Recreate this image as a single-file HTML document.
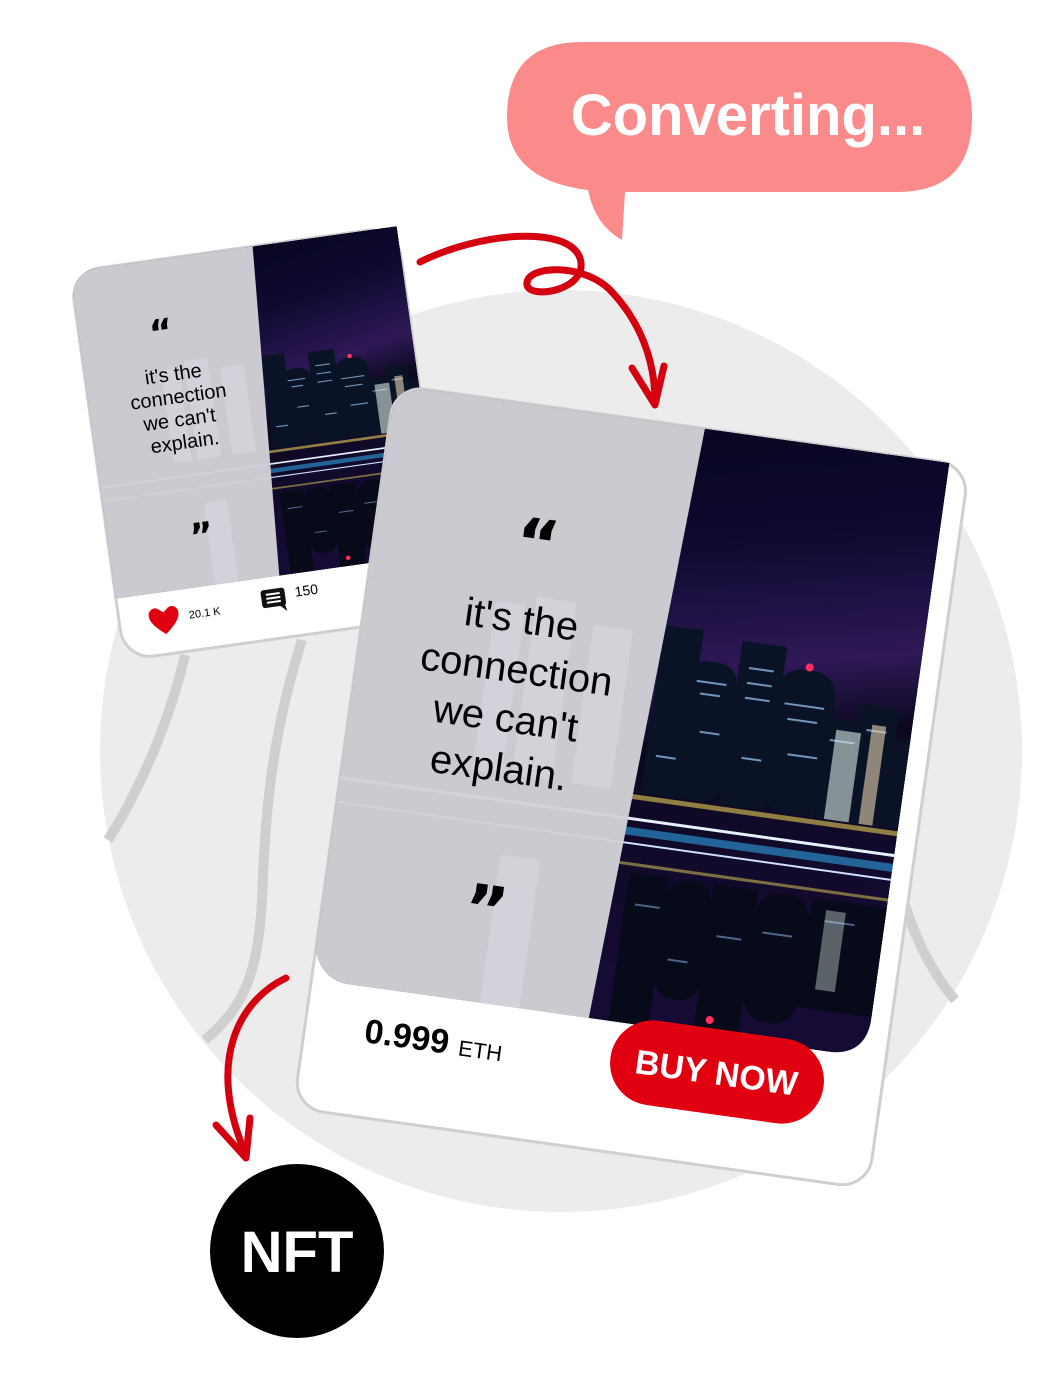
<!DOCTYPE html>
<html><head><meta charset="utf-8"><style>
html,body{margin:0;padding:0;background:#fff;}
svg{display:block;}
text{font-family:"Liberation Sans",sans-serif;}
.q{font-family:"DejaVu Sans",sans-serif;font-weight:bold;}
</style></head><body>
<svg width="1060" height="1378" viewBox="0 0 1060 1378" xmlns="http://www.w3.org/2000/svg">
<defs>
<linearGradient id="sky" x1="0" y1="0" x2="0.2" y2="1">
<stop offset="0" stop-color="#05041a"/><stop offset="0.3" stop-color="#0e0a30"/><stop offset="0.5" stop-color="#2e1856"/><stop offset="0.62" stop-color="#0c0820"/><stop offset="1" stop-color="#160b34"/>
</linearGradient>
<symbol id="city" viewBox="0 0 560 600" preserveAspectRatio="none">
<rect width="560" height="600" fill="url(#sky)"/>
<g fill="#0a1226">
<rect x="300" y="200" width="40" height="170"/><rect x="330" y="230" width="50" height="140" rx="20"/>
<rect x="380" y="205" width="45" height="165"/><rect x="420" y="225" width="60" height="145" rx="25"/>
<rect x="470" y="270" width="40" height="100"/><rect x="505" y="250" width="40" height="120"/><rect x="540" y="280" width="20" height="90"/>
</g>
<g fill="#9fd0ff" opacity="0.7">
<rect x="340" y="250" width="30" height="2"/><rect x="345" y="262" width="20" height="2"/><rect x="390" y="230" width="25" height="2"/><rect x="390" y="245" width="25" height="2"/><rect x="390" y="260" width="25" height="2"/><rect x="430" y="260" width="40" height="2"/><rect x="435" y="275" width="30" height="2"/><rect x="480" y="290" width="25" height="2"/><rect x="515" y="275" width="20" height="2"/><rect x="350" y="300" width="20" height="2"/><rect x="440" y="310" width="30" height="2"/><rect x="395" y="320" width="20" height="2"/><rect x="310" y="330" width="20" height="2"/>
</g>
<rect x="485" y="280" width="25" height="90" fill="#d8e8e0" opacity="0.6"/>
<rect x="520" y="270" width="14" height="100" fill="#e6d6b0" opacity="0.6"/>
<circle cx="450" cy="222" r="4" fill="#ff3060"/>
<rect x="290" y="372" width="270" height="5" fill="#c8b050" opacity="0.7"/>
<rect x="280" y="395" width="280" height="3" fill="#e6f2ff"/>
<rect x="280" y="405" width="280" height="8" fill="#2a8ac8" opacity="0.7"/>
<rect x="280" y="420" width="280" height="2" fill="#cfe0ff"/>
<rect x="280" y="440" width="280" height="3" fill="#c8b050" opacity="0.6"/>
<g fill="#070a18">
<rect x="300" y="450" width="40" height="150"/><rect x="340" y="450" width="45" height="120" rx="20"/><rect x="385" y="450" width="45" height="150"/><rect x="430" y="450" width="55" height="130" rx="25"/><rect x="485" y="450" width="75" height="110"/>
</g>
<g fill="#8fc0ff" opacity="0.5">
<rect x="310" y="480" width="25" height="2"/><rect x="395" y="500" width="25" height="2"/><rect x="440" y="490" width="30" height="2"/><rect x="500" y="470" width="30" height="2"/><rect x="350" y="530" width="20" height="2"/>
</g>
<rect x="500" y="460" width="20" height="80" fill="#d8e8e0" opacity="0.4"/>
<circle cx="400" cy="585" r="4" fill="#ff3060"/>
<path d="M0 0 H313 L280 600 H0 Z" fill="#cbcad0"/>
<g fill="#dcdee6" opacity="0.45">
<rect x="130" y="200" width="30" height="170"/><rect x="170" y="190" width="40" height="180"/><rect x="230" y="210" width="40" height="160"/>
<rect x="0" y="395" width="300" height="3"/><rect x="0" y="420" width="290" height="2"/>
<rect x="170" y="450" width="40" height="150"/>
</g>
</symbol>
<clipPath id="bigclip"><path d="M0 40 Q0 0 40 0 H560 V560 Q560 600 520 600 H40 Q10 600 0 570 Z"/></clipPath>
<clipPath id="smclip"><path d="M0 30 Q0 0 30 0 H330 V330 H0 Z"/></clipPath>
</defs>

<circle cx="561" cy="751" r="461" fill="#ececec"/>
<g fill="none" stroke="#cfcfcf" stroke-width="10">
<path d="M185 655 C170 720 140 790 108 840"/>
<path d="M302 640 C270 740 265 820 262 900 C258 980 240 1010 205 1040"/>
<path d="M898 880 C910 930 930 970 955 1000"/>
</g>

<path d="M582 42 H897 Q972 42 972 117 Q972 192 897 192 H625 L622 240 Q595 225 588 190 Q507 180 507 117 Q507 42 582 42 Z" fill="#fb8a8b"/>
<text x="748" y="135" font-size="58" font-weight="bold" fill="#fff" text-anchor="middle">Converting...</text>

<g transform="translate(70,272) rotate(-8)">
<rect x="0" y="0" width="330" height="392" rx="30" fill="#fff" stroke="#cfcfcf" stroke-width="3"/>
<g clip-path="url(#smclip)"><use href="#city" x="0" y="0" width="330" height="330"/></g>
<text class="q" x="82" y="85" font-size="36" text-anchor="middle">&#8220;</text>
<g font-size="20" text-anchor="middle">
<text x="88" y="122">it's the</text><text x="90" y="145">connection</text><text x="88" y="168">we can't</text><text x="90" y="191">explain.</text>
</g>
<text class="q" x="94" y="292" font-size="36" text-anchor="middle">&#8221;</text>
<path d="M45 372 C35 364 30 358 30 352 C30 346 36 343 40 346 L45 350 L50 346 C54 343 60 346 60 352 C60 358 55 364 45 372Z" fill="#e00010"/>
<text x="70" y="360" font-size="11">20.1 K</text>
<rect x="144" y="342" width="24" height="18" rx="3" fill="#111"/><path d="M160 358 L168 366 L166 356Z" fill="#111"/>
<g stroke="#fff" stroke-width="2"><line x1="149" y1="347" x2="163" y2="347"/><line x1="149" y1="351" x2="163" y2="351"/><line x1="149" y1="355" x2="163" y2="355"/></g>
<text x="178" y="353" font-size="14">150</text>
</g>

<g transform="translate(395,385) rotate(8)">
<rect x="0" y="0" width="580" height="730" rx="30" fill="#fff" stroke="#cfcfcf" stroke-width="3"/>
<g clip-path="url(#bigclip)"><use href="#city" x="0" y="0" width="560" height="600"/></g>
<text class="q" x="163" y="160" font-size="66" text-anchor="middle">&#8220;</text>
<g font-size="40" text-anchor="middle">
<text x="158" y="228">it's the</text><text x="160" y="278">connection</text><text x="156" y="328">we can't</text><text x="156" y="378">explain.</text>
</g>
<text class="q" x="163" y="530" font-size="66" text-anchor="middle">&#8221;</text>
<text x="60" y="655" font-size="34" font-weight="bold">0.999<tspan font-size="22" font-weight="normal" dx="10">ETH</tspan></text>
<rect x="307" y="593" width="215" height="85" rx="42" fill="#e00010"/>
<text x="414" y="648" font-size="34" font-weight="bold" fill="#fff" text-anchor="middle">BUY NOW</text>
</g>

<g fill="none" stroke="#d40010" stroke-width="7" stroke-linecap="round" stroke-linejoin="round">
<path d="M420 262 C480 232 568 225 580 258 C590 290 530 300 527 285 C524 265 585 262 612 292 C640 322 655 360 655 402"/>
<path d="M632 368 L655 405 L664 366"/>
<path d="M286 978 C240 1000 205 1060 246 1155"/>
<path d="M216 1125 L246 1158 L250 1118"/>
</g>

<circle cx="297" cy="1251" r="87" fill="#000"/>
<text x="297" y="1272" font-size="58" font-weight="bold" fill="#fff" text-anchor="middle">NFT</text>
</svg>
</body></html>
